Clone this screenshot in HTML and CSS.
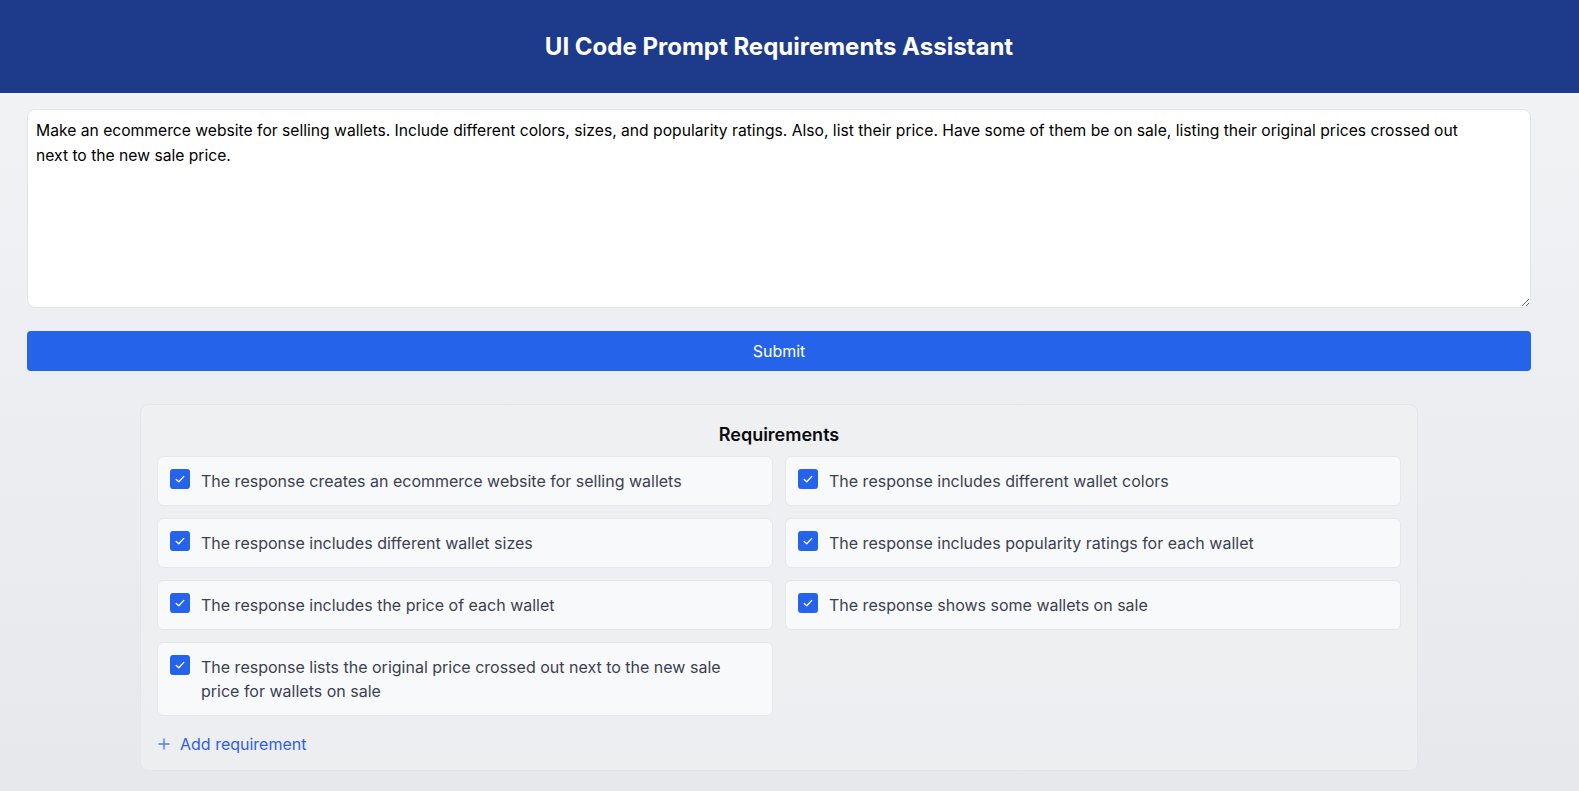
FILE: index.html
```html
<!DOCTYPE html>
<html lang="en">
<head>
<meta charset="utf-8">
<title>UI Code Prompt Requirements Assistant</title>
<link rel="stylesheet" href="styles.css">
</head>
<body>
<header class="header">
  <h1 class="header-title">UI Code Prompt Requirements Assistant</h1>
</header>
<main class="main">
  <textarea class="prompt">Make an ecommerce website for selling wallets. Include different colors, sizes, and popularity ratings. Also, list their price. Have some of them be on sale, listing their original prices crossed out next to the new sale price.</textarea>
  <button class="submit" type="button">Submit</button>
  <section class="panel">
    <h2 class="panel-title">Requirements</h2>
    <div class="grid">
      <div class="card"><span class="check"><svg viewBox="0 0 20 20" width="20" height="20"><path d="M6.2 10.4 L8.8 12.8 L13.8 7.4" fill="none" stroke="#fff" stroke-width="1.3" stroke-linecap="round" stroke-linejoin="round"/></svg></span><span class="card-text">The response creates an ecommerce website for selling wallets</span></div>
      <div class="card"><span class="check"><svg viewBox="0 0 20 20" width="20" height="20"><path d="M6.2 10.4 L8.8 12.8 L13.8 7.4" fill="none" stroke="#fff" stroke-width="1.3" stroke-linecap="round" stroke-linejoin="round"/></svg></span><span class="card-text">The response includes different wallet colors</span></div>
      <div class="card"><span class="check"><svg viewBox="0 0 20 20" width="20" height="20"><path d="M6.2 10.4 L8.8 12.8 L13.8 7.4" fill="none" stroke="#fff" stroke-width="1.3" stroke-linecap="round" stroke-linejoin="round"/></svg></span><span class="card-text">The response includes different wallet sizes</span></div>
      <div class="card"><span class="check"><svg viewBox="0 0 20 20" width="20" height="20"><path d="M6.2 10.4 L8.8 12.8 L13.8 7.4" fill="none" stroke="#fff" stroke-width="1.3" stroke-linecap="round" stroke-linejoin="round"/></svg></span><span class="card-text">The response includes popularity ratings for each wallet</span></div>
      <div class="card"><span class="check"><svg viewBox="0 0 20 20" width="20" height="20"><path d="M6.2 10.4 L8.8 12.8 L13.8 7.4" fill="none" stroke="#fff" stroke-width="1.3" stroke-linecap="round" stroke-linejoin="round"/></svg></span><span class="card-text">The response includes the price of each wallet</span></div>
      <div class="card"><span class="check"><svg viewBox="0 0 20 20" width="20" height="20"><path d="M6.2 10.4 L8.8 12.8 L13.8 7.4" fill="none" stroke="#fff" stroke-width="1.3" stroke-linecap="round" stroke-linejoin="round"/></svg></span><span class="card-text">The response shows some wallets on sale</span></div>
      <div class="card"><span class="check"><svg viewBox="0 0 20 20" width="20" height="20"><path d="M6.2 10.4 L8.8 12.8 L13.8 7.4" fill="none" stroke="#fff" stroke-width="1.3" stroke-linecap="round" stroke-linejoin="round"/></svg></span><span class="card-text">The response lists the original price crossed out next to the new sale price for wallets on sale</span></div>
    </div>
    <button class="add" type="button"><svg class="add-icon" viewBox="0 0 12 12" width="12" height="12"><path d="M6 0.5 V11.5 M0.5 6 H11.5" stroke="#4f7ff0" stroke-width="1.4" fill="none"/></svg><span>Add requirement</span></button>
  </section>
</main>
</body>
</html>
```

FILE: styles.css
```css
* { box-sizing: border-box; }
html, body { margin: 0; padding: 0; }
body {
  font-family: Inter, "Noto Sans", sans-serif;
  min-height: 100vh;
  background: linear-gradient(#f3f4f6, #e7e8ec);
  color: #111827;
}
.header {
  height: 93px;
  background: #1e3a8a;
  display: flex;
  align-items: center;
  justify-content: center;
  padding-right: 21px;
}
.header-title {
  margin: 0;
  color: #fff;
  font-size: 24px;
  line-height: 32px;
  font-weight: 700;
}
.main {
  padding: 16px 48px 0 27px;
  display: flex;
  flex-direction: column;
}
.prompt {
  display: block;
  width: 100%;
  height: 199px;
  padding: 8px 40px 8px 8px;
  font-family: Inter, "Noto Sans", sans-serif;
  font-size: 15.67px;
  line-height: 25px;
  color: #000;
  background: #fff;
  border: 1px solid #e2e4e8;
  border-radius: 8px;
  outline: none;
}
.submit {
  margin-top: 23px;
  height: 40px;
  width: 100%;
  border: 0;
  border-radius: 4px;
  background: #2563eb;
  color: #fff;
  font-family: Inter, "Noto Sans", sans-serif;
  font-size: 16px;
}
.panel {
  margin: 33px auto 0;
  width: 1278px;
  padding: 16px 16px 14px;
  border: 1px solid #e3e5e9;
  border-radius: 8px;
  background: rgba(240, 241, 244, 0.6);
}
.panel-title {
  margin: 0 0 7px;
  text-align: center;
  font-size: 18px;
  line-height: 28px;
  font-weight: 600;
  color: #0b0b0f;
}
.grid {
  display: grid;
  grid-template-columns: 1fr 1fr;
  gap: 12px;
  align-items: start;
}
.card {
  display: flex;
  align-items: flex-start;
  gap: 11px;
  padding: 12px;
  background: #f8f9fb;
  border: 1px solid #e4e6ea;
  border-radius: 6px;
}
.check {
  flex: none;
  width: 20px;
  height: 20px;
  border-radius: 3px;
  background: #2563eb;
  display: block;
}
.check svg { display: block; }
.card-text {
  font-size: 16px;
  line-height: 24px;
  color: #3b4150;
}
.add {
  margin-top: 16px;
  display: flex;
  align-items: center;
  gap: 10px;
  padding: 0;
  border: 0;
  background: none;
  font-family: Inter, "Noto Sans", sans-serif;
  font-size: 16px;
  line-height: 24px;
  color: #2f5fe0;
}
.add-icon { display: block; margin-left: 1px; }
```
